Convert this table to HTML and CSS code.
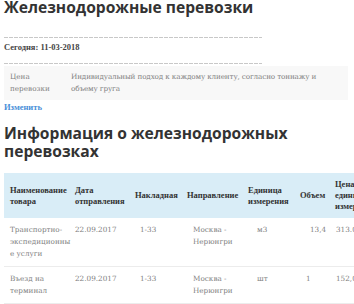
FILE: index.html
```html
<!DOCTYPE html>
<html lang="ru">
<head>
<meta charset="utf-8">
<link rel="stylesheet" href="styles.css">
</head>
<body>
<div class="page">
  <h1 class="title">Железнодорожные перевозки</h1>
  <div class="sep sep-top"></div>
  <p class="today">Сегодня: 11-03-2018</p>
  <div class="sep sep-bottom"></div>
  <div class="info">
    <div class="info-label">Цена перевозки</div>
    <div class="info-value">Индивидуальный подход к каждому клиенту, согласно тоннажу и объему груга</div>
  </div>
  <a class="edit" href="#">Изменить</a>
  <h2 class="subtitle">Информация о железнодорожных перевозках</h2>
  <div class="table-wrap">
    <table class="data">
      <colgroup>
        <col class="c1"><col class="c2"><col class="c3"><col class="c4"><col class="c5"><col class="c6"><col class="c7">
      </colgroup>
      <thead>
        <tr>
          <th>Наименование товара</th>
          <th>Дата отправления</th>
          <th>Накладная</th>
          <th>Направление</th>
          <th>Единица измерения</th>
          <th>Объем</th>
          <th>Цена за единицу измерения</th>
        </tr>
      </thead>
      <tbody>
        <tr>
          <td>Транспортно-экспедиционные услуги</td>
          <td>22.09.2017</td>
          <td>1-33</td>
          <td>Москва - Нерюнгри</td>
          <td>м3</td>
          <td>13,4</td>
          <td>313.00</td>
        </tr>
        <tr>
          <td>Въезд на терминал</td>
          <td>22.09.2017</td>
          <td>1-33</td>
          <td>Москва - Нерюнгри</td>
          <td>шт</td>
          <td class="one">1</td>
          <td>152,00</td>
        </tr>
      </tbody>
    </table>
  </div>
</div>
</body>
</html>
```
FILE: styles.css
```css
html, body {
  margin: 0;
  padding: 0;
  background: #fff;
  overflow: hidden;
}
.page {
  padding: 0 0 0 4px;
  font-family: "DejaVu Serif", "Liberation Serif", serif;
  font-size: 7.25px;
  line-height: 12px;
  color: #808080;
}
.title {
  margin: -2px 0 0 0;
  font-family: "Open Sans", "Noto Sans", sans-serif;
  font-weight: 700;
  font-size: 15.6px;
  line-height: 18px;
  color: #333;
}
.sep {
  width: 258px;
  height: 1px;
  background: repeating-linear-gradient(90deg, #c8c8c8 0 4px, transparent 4px 5px);
}
.sep-top {
  margin-top: 21px;
}
.today {
  margin: 3px 0 0 0;
  font-family: "Liberation Serif", "DejaVu Serif", serif;
  font-size: 8.5px;
  font-weight: 700;
  color: #444;
  line-height: 12px;
}
.sep-bottom {
  margin-top: 10px;
}
.info {
  margin-top: 2px;
  width: 344px;
  display: grid;
  grid-template-columns: 67px 1fr;
  padding: 5px 0;
  background: #f8f8f8;
}
.info-label {
  padding: 0 4px 0 6px;
}
.info-value {
  padding-right: 20px;
  letter-spacing: -0.15px;
}
.edit {
  display: block;
  margin-top: 1px;
  font-family: "Liberation Serif", "DejaVu Serif", serif;
  font-size: 8.5px;
  font-weight: 700;
  color: #4a90d9;
  text-decoration: none;
  line-height: 12px;
}
.subtitle {
  margin: 11px 0 0 0;
  font-family: "Open Sans", "Noto Sans", sans-serif;
  font-weight: 700;
  font-size: 15.6px;
  line-height: 18px;
  color: #333;
  width: 320px;
}
.table-wrap {
  margin-top: 13px;
  width: 350px;
  overflow: hidden;
}
.data {
  table-layout: fixed;
  width: 381px;
  border-collapse: collapse;
}
.c1 { width: 68px; }
.c2 { width: 57px; }
.c3 { width: 52px; }
.c4 { width: 61px; }
.c5 { width: 52px; }
.c6 { width: 35px; }
.c7 { width: 56px; }
.data th {
  background: #d9edf7;
  color: #333;
  font-family: "Liberation Serif", "DejaVu Serif", serif;
  font-size: 8.5px;
  font-weight: 700;
  text-align: left;
  vertical-align: middle;
  line-height: 11px;
  padding: 6px 1px 6px 6px;
  overflow-wrap: anywhere;
}
.data td {
  vertical-align: top;
  padding: 6px 0 6px 6px;
  border-bottom: 1px solid #ececec;
  overflow-wrap: anywhere;
}
.data th:nth-child(2),
.data td:nth-child(2) { padding-left: 3px; }
.data td:nth-child(3) { padding-left: 11px; }
.data td:nth-child(4) { padding-left: 12px; }
.data td:nth-child(5) { padding-left: 15px; }
.data td:nth-child(6) { padding-left: 16px; }
.data td:nth-child(7) { padding-left: 7px; }
.data td.one { padding-left: 12px; }
```
